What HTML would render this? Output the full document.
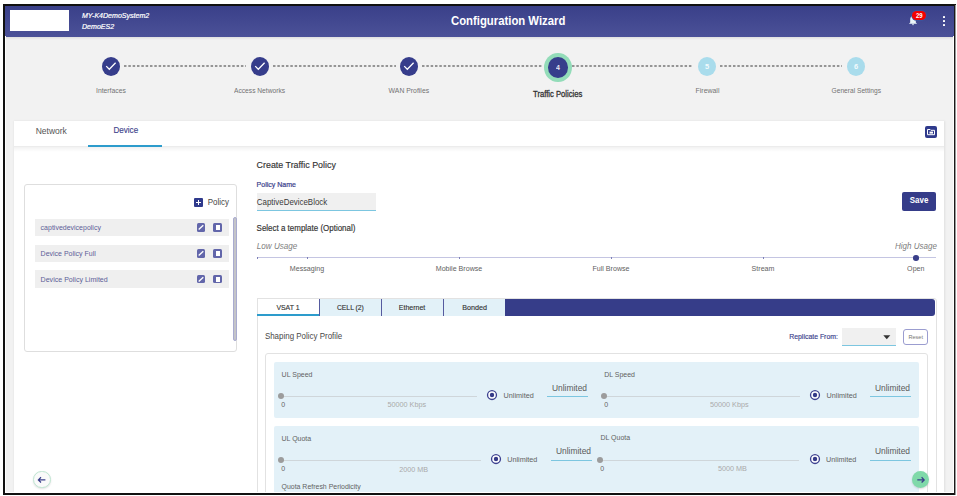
<!DOCTYPE html>
<html><head><meta charset="utf-8">
<style>
*{margin:0;padding:0;box-sizing:border-box}
html,body{width:957px;height:496px;overflow:hidden;background:#fff;font-family:"Liberation Sans",sans-serif}
.a{position:absolute;white-space:nowrap;line-height:1}
.sb{-webkit-text-stroke:0.15px currentColor}
.step{position:absolute;border-radius:50%}
.dash{position:absolute;height:1.8px;top:65.3px;background:repeating-linear-gradient(90deg,#8f8f8f 0 2.6px,transparent 2.6px 4.05px)}
.lbl{font-size:6.8px;color:#737373;margin-top:1.2px}
.row{position:absolute;left:34.5px;width:194.5px;height:17.5px;background:#efefef}
.rowt{font-size:7px;color:#5d5e98}
.ic{position:absolute;width:8.5px;height:8.5px;border-radius:1.5px;background:#6266aa}
.pnl{position:absolute;background:#e3f1f8;border-radius:2px}
.t7{font-size:7px;color:#626262}
.trk{position:absolute;height:1px;background:#cfd6da}
.knob{position:absolute;width:6px;height:6px;border-radius:50%;background:#9c9c9c}
.radio{position:absolute;width:10px;height:10px;border-radius:50%;border:1.5px solid #3a3f8a;background:#fff}
.radio:after{content:"";position:absolute;left:1.1px;top:1.1px;width:4.8px;height:4.8px;border-radius:50%;background:#3a3f8a}
.ul{position:absolute;height:1.3px;background:#7cc6e0}
.tab{position:absolute;top:298.5px;height:17.3px;width:62px;background:#e2f1f8;border-left:1px solid #555a9f}
.tabt{font-size:7px;color:#333;width:62px;height:17.3px;line-height:17.3px;text-align:center;-webkit-text-stroke:0.12px #333}
.lbl,.rowt,.t7{transform:scaleY(1.06);transform-origin:0 50%}
</style></head><body>
<!-- frame -->
<div class="a" style="left:3px;top:4px;width:953px;height:491px;border:2px solid #111;background:#f2f2f2"></div>
<!-- header -->
<div class="a" style="left:5px;top:6px;width:949px;height:30.5px;background:linear-gradient(#3a4089,#4b5198)"></div>
<div class="a" style="left:5px;top:36.5px;width:949px;height:3px;background:linear-gradient(rgba(0,0,0,0.08),rgba(0,0,0,0))"></div>
<div class="a" style="left:10px;top:10px;width:59px;height:21px;background:#fff"></div>
<div class="a" style="left:82px;top:12.1px;font-size:7.05px;font-style:italic;color:#fff;-webkit-text-stroke:0.2px #fff;transform:scaleY(1.06);transform-origin:0 50%">MY-K4DemoSystem2</div>
<div class="a" style="left:82px;top:23.1px;font-size:7.05px;font-style:italic;color:#fff;-webkit-text-stroke:0.2px #fff;transform:scaleY(1.06);transform-origin:0 50%">DemoES2</div>
<div class="a" style="left:450.9px;top:14.8px;font-size:12.4px;font-weight:bold;color:#fff;transform:scaleX(0.914);transform-origin:0 0">Configuration Wizard</div>
<!-- bell -->
<svg class="a" style="left:908.3px;top:13px" width="10" height="14" viewBox="0 0 10 14"><path d="M5 3C3.2 3 2.2 4.6 2.2 6.6v2.8L0.9 10.8h8.2L7.8 9.4V6.6C7.8 4.6 6.8 3 5 3z" fill="#eaf5f8"/><path d="M3.9 10.8h2.2L5 12.6z" fill="#eaf5f8"/></svg>
<div class="a" style="left:912.4px;top:11px;width:13.7px;height:9.4px;border-radius:4.7px;background:#f40000;box-shadow:0 0 0 0.7px #3a56a0"></div>
<div class="a" style="left:912.4px;top:12.7px;width:13.7px;text-align:center;font-size:6px;font-weight:bold;color:#fff;transform:scaleY(1.06);transform-origin:0 50%">29</div>
<div class="a" style="left:943px;top:15.5px;width:2.3px;height:2.1px;background:#fff;border-radius:0.6px"></div>
<div class="a" style="left:943px;top:19.7px;width:2.3px;height:2.1px;background:#fff;border-radius:0.6px"></div>
<div class="a" style="left:943px;top:23.8px;width:2.3px;height:2.1px;background:#fff;border-radius:0.6px"></div>

<!-- stepper -->
<svg class="a" style="left:124px;top:64.1px" width="122" height="4"><line x1="0" y1="2" x2="122" y2="2" stroke="#959595" stroke-width="1.8" stroke-dasharray="2.5 1.83"/></svg>
<svg class="a" style="left:273px;top:64.1px" width="123" height="4"><line x1="0" y1="2" x2="123" y2="2" stroke="#959595" stroke-width="1.8" stroke-dasharray="2.5 1.83"/></svg>
<svg class="a" style="left:422px;top:64.1px" width="120" height="4"><line x1="0" y1="2" x2="120" y2="2" stroke="#959595" stroke-width="1.8" stroke-dasharray="2.5 1.83"/></svg>
<svg class="a" style="left:572px;top:64.1px" width="121" height="4"><line x1="0" y1="2" x2="121" y2="2" stroke="#959595" stroke-width="1.8" stroke-dasharray="2.5 1.83"/></svg>
<svg class="a" style="left:720px;top:64.1px" width="122" height="4"><line x1="0" y1="2" x2="122" y2="2" stroke="#959595" stroke-width="1.8" stroke-dasharray="2.5 1.83"/></svg>

<div class="step" style="left:101.5px;top:57px;width:18.2px;height:19px;background:#363d8b"></div>
<div class="step" style="left:250.7px;top:57px;width:18.2px;height:19px;background:#363d8b"></div>
<div class="step" style="left:399.6px;top:57px;width:18.2px;height:19px;background:#363d8b"></div>
<svg class="a" style="left:101.5px;top:57.3px" width="18" height="18" viewBox="0 0 18 18"><path d="M4.2 9.1l3.1 3.2 6.3-6.6" stroke="#fff" stroke-width="1.25" fill="none"/></svg>
<svg class="a" style="left:250.8px;top:57.3px" width="18" height="18" viewBox="0 0 18 18"><path d="M4.2 9.1l3.1 3.2 6.3-6.6" stroke="#fff" stroke-width="1.25" fill="none"/></svg>
<svg class="a" style="left:399.7px;top:57.3px" width="18" height="18" viewBox="0 0 18 18"><path d="M4.2 9.1l3.1 3.2 6.3-6.6" stroke="#fff" stroke-width="1.25" fill="none"/></svg>
<div class="step" style="left:544.2px;top:52.6px;width:27.6px;height:29px;background:#93dcb9"></div>
<div class="step" style="left:548px;top:57px;width:19.8px;height:20.7px;background:#363d8b"></div>
<div class="a" style="left:548px;top:63.5px;width:20px;text-align:center;font-size:7px;font-weight:bold;color:#e8e8f4;transform:scaleY(1.06);transform-origin:0 50%">4</div>
<div class="step" style="left:698px;top:57px;width:18px;height:19px;background:#a9dcec"></div>
<div class="a" style="left:698px;top:62.6px;width:18px;text-align:center;font-size:7.5px;font-weight:bold;color:#f2fafd;transform:scaleY(1.06);transform-origin:0 50%">5</div>
<div class="step" style="left:847px;top:57px;width:18.2px;height:19px;background:#a9dcec"></div>
<div class="a" style="left:847px;top:62.6px;width:18px;text-align:center;font-size:7.5px;font-weight:bold;color:#f2fafd;transform:scaleY(1.06);transform-origin:0 50%">6</div>

<div class="a lbl" style="left:96px;top:86.6px">Interfaces</div>
<div class="a lbl" style="left:234px;top:86.6px;font-size:6.66px;transform:scaleY(1.06);transform-origin:0 50%">Access Networks</div>
<div class="a lbl" style="left:388.6px;top:86.6px;font-size:6.87px;transform:scaleY(1.06);transform-origin:0 50%">WAN Profiles</div>
<div class="a" style="left:533.3px;top:90.2px;font-size:8.3px;color:#333;-webkit-text-stroke:0.3px #333;transform:scaleX(0.923);transform-origin:0 0">Traffic Policies</div>
<div class="a lbl" style="left:695.6px;top:86.6px;font-size:6.93px;transform:scaleY(1.06);transform-origin:0 50%">Firewall</div>
<div class="a lbl" style="left:831.6px;top:86.6px;font-size:6.64px;transform:scaleY(1.06);transform-origin:0 50%">General Settings</div>

<!-- card -->
<div class="a" style="left:14px;top:121px;width:930px;height:372px;background:#fff;box-shadow:0 0 2px 0.5px rgba(0,0,0,0.08)"></div>
<div class="a" style="left:14px;top:146px;width:930px;height:1px;background:#ececec"></div>
<div class="a" style="left:14px;top:147px;width:930px;height:5px;background:linear-gradient(rgba(0,0,0,0.05),rgba(0,0,0,0))"></div>
<div class="a" style="left:35.7px;top:127.4px;font-size:8.5px;color:#555;transform:scaleY(1.06);transform-origin:0 50%">Network</div>
<div class="a" style="left:113.4px;top:127.1px;font-size:8.1px;color:#3d3f8a;-webkit-text-stroke:0.12px #3d3f8a;transform:scaleY(1.06);transform-origin:0 50%">Device</div>
<div class="a" style="left:88px;top:145.3px;width:74px;height:2px;background:#2d9ccc"></div>
<div class="a" style="left:925.3px;top:126.2px;width:11.5px;height:11.7px;border-radius:2px;background:#2f3a8c"></div>
<svg class="a" style="left:925.3px;top:126.2px" width="12" height="12" viewBox="0 0 12 12"><path d="M2.5 3.5h2.6l0.8 0.8h3.6v4.4h-7z" fill="none" stroke="#fff" stroke-width="1"/><rect x="4.5" y="5.6" width="3.5" height="2" fill="#fff"/></svg>

<!-- left panel -->
<div class="a" style="left:24.2px;top:184.4px;width:213.2px;height:167.3px;border:1px solid #dedede;border-radius:3px;background:#fff"></div>
<div class="a" style="left:194.3px;top:197.9px;width:9px;height:8.8px;border-radius:1px;background:#2f3a8c"></div>
<div class="a" style="left:198.2px;top:199.6px;width:1.3px;height:5.4px;background:#fff"></div>
<div class="a" style="left:196.2px;top:201.6px;width:5.3px;height:1.3px;background:#fff"></div>
<div class="a" style="left:207.7px;top:198.7px;font-size:7.96px;color:#444;transform:scaleY(1.06);transform-origin:0 50%">Policy</div>

<div class="row" style="top:218.7px"></div>
<div class="row" style="top:244.5px"></div>
<div class="row" style="top:270.3px"></div>
<div class="a rowt" style="left:40.6px;top:224.2px">captivedevicepolicy</div>
<div class="a rowt" style="left:40.6px;top:250px">Device Policy Full</div>
<div class="a rowt" style="left:40.6px;top:275.8px;font-size:7.07px;transform:scaleY(1.06);transform-origin:0 50%">Device Policy Limited</div>

<div class="ic" style="left:196.8px;top:223.3px"></div>
<div class="ic" style="left:213.4px;top:223.3px"></div>
<div class="ic" style="left:196.8px;top:249.1px"></div>
<div class="ic" style="left:213.4px;top:249.1px"></div>
<div class="ic" style="left:196.8px;top:274.9px"></div>
<div class="ic" style="left:213.4px;top:274.9px"></div>
<svg class="a" style="left:196.8px;top:223.3px" width="9" height="9"><path d="M1.7 6.4L6.3 2.2" stroke="#fff" stroke-width="1.35"/></svg>
<svg class="a" style="left:196.8px;top:249.1px" width="9" height="9"><path d="M1.7 6.4L6.3 2.2" stroke="#fff" stroke-width="1.35"/></svg>
<svg class="a" style="left:196.8px;top:274.9px" width="9" height="9"><path d="M1.7 6.4L6.3 2.2" stroke="#fff" stroke-width="1.35"/></svg>
<div class="a" style="left:216px;top:225.3px;width:3.6px;height:4.8px;background:#fff"></div>
<div class="a" style="left:216px;top:251.1px;width:3.6px;height:4.8px;background:#fff"></div>
<div class="a" style="left:216px;top:276.9px;width:3.6px;height:4.8px;background:#fff"></div>
<div class="a" style="left:232.6px;top:217.2px;width:4px;height:124px;border-radius:2px;background:#c4c4c8;border:0.6px solid #a9abd0"></div>

<!-- form -->
<div class="a sb" style="left:256.6px;top:161.4px;font-size:8.88px;color:#333;transform:scaleY(1.06);transform-origin:0 50%">Create Traffic Policy</div>
<div class="a" style="left:256.6px;top:181px;font-size:6.55px;font-weight:bold;color:#3b3f8c;font-weight:normal;-webkit-text-stroke:0.2px #3b3f8c;font-size:7px;transform:scaleY(1.06);transform-origin:0 50%">Policy Name</div>
<div class="a" style="left:256.6px;top:193.3px;width:119.2px;height:17px;background:#f0f0f0"></div>
<div class="a ul" style="left:256.6px;top:209.5px;width:119.2px"></div>
<div class="a" style="left:256.8px;top:198.5px;font-size:7.93px;color:#3a3a3a;transform:scaleY(1.06);transform-origin:0 50%">CaptiveDeviceBlock</div>
<div class="a" style="left:902.2px;top:191.7px;width:33.8px;height:18.9px;border-radius:2px;background:#353c89"></div>
<div class="a" style="left:902.2px;top:197px;width:33.8px;text-align:center;font-size:7.95px;font-weight:bold;color:#fff;transform:scaleY(1.06);transform-origin:0 50%">Save</div>

<div class="a sb" style="left:256.6px;top:224.9px;font-size:7.97px;color:#333;transform:scaleY(1.06);transform-origin:0 50%">Select a template (Optional)</div>
<div class="a" style="left:256.8px;top:243px;font-size:8.1px;font-style:italic;color:#808080;transform:scaleY(1.06);transform-origin:0 50%">Low Usage</div>
<div class="a" style="left:895px;top:242.5px;font-size:8.04px;font-style:italic;color:#808080;transform:scaleY(1.06);transform-origin:0 50%">High Usage</div>
<div class="a" style="left:256.5px;top:257.2px;width:679px;height:1.3px;background:#c4c5e2"></div>
<div class="a" style="left:256.8px;top:257px;width:1px;height:1.6px;background:#7e81b8"></div>
<div class="a" style="left:307px;top:257px;width:1px;height:1.6px;background:#7e81b8"></div>
<div class="a" style="left:459px;top:257px;width:1px;height:1.6px;background:#7e81b8"></div>
<div class="a" style="left:611px;top:257px;width:1px;height:1.6px;background:#7e81b8"></div>
<div class="a" style="left:763px;top:257px;width:1px;height:1.6px;background:#7e81b8"></div>
<div class="a" style="left:913.1px;top:255px;width:5.6px;height:5.6px;border-radius:50%;background:#3a3f8a"></div>
<div class="a t7" style="left:257px;top:265.7px;width:100px;text-align:center;font-size:7.1px;transform:scaleY(1.06);transform-origin:0 50%">Messaging</div>
<div class="a t7" style="left:409px;top:265.7px;width:100px;text-align:center;font-size:7.1px;transform:scaleY(1.06);transform-origin:0 50%">Mobile Browse</div>
<div class="a t7" style="left:561px;top:265.7px;width:100px;text-align:center;font-size:7.1px;transform:scaleY(1.06);transform-origin:0 50%">Full Browse</div>
<div class="a t7" style="left:713px;top:265.7px;width:100px;text-align:center;font-size:7.1px;transform:scaleY(1.06);transform-origin:0 50%">Stream</div>
<div class="a t7" style="left:865.8px;top:265.7px;width:100px;text-align:center;font-size:7.1px;transform:scaleY(1.06);transform-origin:0 50%">Open</div>

<!-- tabs -->
<div class="a" style="left:257px;top:298.2px;width:679.6px;height:200px;border:1px solid #e2e2e2;border-radius:3px"></div>
<div class="a" style="left:257px;top:298.2px;width:62.4px;height:17.6px;background:#fff;border-top:1px solid #e2e2e2;border-left:1px solid #e2e2e2"></div>
<div class="a" style="left:257px;top:314px;width:62.4px;height:2px;background:#2d9ccc"></div>
<div class="tab" style="left:319px"></div>
<div class="tab" style="left:381px"></div>
<div class="tab" style="left:443px"></div>
<div class="a" style="left:505px;top:298.5px;width:430px;height:17.2px;background:#363d89;border-radius:0 3px 3px 0"></div>
<div class="a tabt" style="left:257px;top:298.9px;font-size:6.92px;transform:scaleY(1.06);transform-origin:0 50%">VSAT 1</div>
<div class="a tabt" style="left:319.4px;top:298.9px;font-size:6.8px;transform:scaleY(1.06);transform-origin:0 50%">CELL (2)</div>
<div class="a tabt" style="left:381px;top:298.9px;font-size:7px;transform:scaleY(1.06);transform-origin:0 50%">Ethernet</div>
<div class="a tabt" style="left:443.6px;top:298.9px;font-size:7.2px;transform:scaleY(1.06);transform-origin:0 50%">Bonded</div>

<div class="a" style="left:264.9px;top:332.8px;font-size:7.96px;color:#484848;transform:scaleY(1.06);transform-origin:0 50%">Shaping Policy Profile</div>
<div class="a sb" style="left:789.2px;top:333.9px;font-size:6.92px;color:#3b3f8c;transform:scaleY(1.06);transform-origin:0 50%">Replicate From:</div>
<div class="a" style="left:841.5px;top:328px;width:54.4px;height:17.6px;background:#f0f0f0"></div>
<div class="a ul" style="left:841.5px;top:344.6px;width:54.4px"></div>
<svg class="a" style="left:882.5px;top:334.5px" width="8" height="5"><path d="M0.3 0.3h7l-3.5 4z" fill="#333"/></svg>
<div class="a" style="left:903.4px;top:329.2px;width:24.6px;height:15.5px;border:1px solid #9b9dd0;border-radius:3px"></div>
<div class="a" style="left:903.4px;top:334.5px;width:24.6px;text-align:center;font-size:5.6px;color:#777;transform:scaleY(1.06);transform-origin:0 50%">Reset</div>

<div class="a" style="left:264.6px;top:353.4px;width:663px;height:160px;border:1px solid #e2e2e2;border-radius:3px"></div>
<div class="pnl" style="left:273.5px;top:362px;width:645.5px;height:55.8px"></div>
<div class="pnl" style="left:273.8px;top:425.9px;width:645.5px;height:80px"></div>

<!-- panel 1 -->
<div class="a t7" style="left:281.6px;top:371px">UL Speed</div>
<div class="trk" style="left:281px;top:395.5px;width:195.5px"></div>
<div class="knob" style="left:277.8px;top:393.3px"></div>
<div class="a t7" style="left:281.2px;top:401.2px">0</div>
<div class="a t7" style="left:387.5px;top:401.1px;font-size:7.23px;color:#aaa;transform:scaleY(1.06);transform-origin:0 50%">50000 Kbps</div>
<svg class="a" style="left:485.0px;top:388.1px" width="14" height="14" viewBox="0 0 14 14"><circle cx="7" cy="7" r="4.45" fill="#fff" stroke="#3d4290" stroke-width="1.35"/><circle cx="7" cy="7" r="2.2" fill="#343a88"/></svg>
<div class="a t7" style="left:503.6px;top:391.7px;font-size:7.25px;transform:scaleY(1.06);transform-origin:0 50%">Unlimited</div>
<div class="a" style="left:552px;top:383.8px;font-size:8.41px;color:#5a5a5a;transform:scaleY(1.06);transform-origin:0 50%">Unlimited</div>
<div class="ul" style="left:547.2px;top:395.5px;width:40.8px"></div>

<div class="a t7" style="left:604.3px;top:371.6px;font-size:6.96px;transform:scaleY(1.06);transform-origin:0 50%">DL Speed</div>
<div class="trk" style="left:604px;top:395.5px;width:195.8px"></div>
<div class="knob" style="left:601.3px;top:393px"></div>
<div class="a t7" style="left:604.3px;top:401.4px">0</div>
<div class="a t7" style="left:710px;top:401.1px;font-size:7.23px;color:#aaa;transform:scaleY(1.06);transform-origin:0 50%">50000 Kbps</div>
<svg class="a" style="left:807.6px;top:388.1px" width="14" height="14" viewBox="0 0 14 14"><circle cx="7" cy="7" r="4.45" fill="#fff" stroke="#3d4290" stroke-width="1.35"/><circle cx="7" cy="7" r="2.2" fill="#343a88"/></svg>
<div class="a t7" style="left:826.6px;top:391.7px;font-size:7.25px;transform:scaleY(1.06);transform-origin:0 50%">Unlimited</div>
<div class="a" style="left:875px;top:383.8px;font-size:8.41px;color:#5a5a5a;transform:scaleY(1.06);transform-origin:0 50%">Unlimited</div>
<div class="ul" style="left:870px;top:395.5px;width:41px"></div>

<!-- panel 2 -->
<div class="a t7" style="left:281.5px;top:435.1px">UL Quota</div>
<div class="trk" style="left:281px;top:459.6px;width:199.7px"></div>
<div class="knob" style="left:278.1px;top:456.9px"></div>
<div class="a t7" style="left:281.2px;top:465.4px">0</div>
<div class="a t7" style="left:399.2px;top:465.5px;font-size:7.22px;color:#aaa;transform:scaleY(1.06);transform-origin:0 50%">2000 MB</div>
<svg class="a" style="left:488.9px;top:452.2px" width="14" height="14" viewBox="0 0 14 14"><circle cx="7" cy="7" r="4.45" fill="#fff" stroke="#3d4290" stroke-width="1.35"/><circle cx="7" cy="7" r="2.2" fill="#343a88"/></svg>
<div class="a t7" style="left:507.2px;top:455.8px;font-size:7.25px;transform:scaleY(1.06);transform-origin:0 50%">Unlimited</div>
<div class="a" style="left:556px;top:447.1px;font-size:8.41px;color:#5a5a5a;transform:scaleY(1.06);transform-origin:0 50%">Unlimited</div>
<div class="ul" style="left:550.8px;top:459.7px;width:41.4px"></div>

<div class="a t7" style="left:600.5px;top:435.3px;font-size:6.97px;transform:scaleY(1.06);transform-origin:0 50%">DL Quota</div>
<div class="trk" style="left:600px;top:459.8px;width:199.3px"></div>
<div class="knob" style="left:597px;top:457px"></div>
<div class="a t7" style="left:600.2px;top:465.4px">0</div>
<div class="a t7" style="left:717.9px;top:465.3px;font-size:7.25px;color:#aaa;transform:scaleY(1.06);transform-origin:0 50%">5000 MB</div>
<svg class="a" style="left:807.7px;top:452.4px" width="14" height="14" viewBox="0 0 14 14"><circle cx="7" cy="7" r="4.45" fill="#fff" stroke="#3d4290" stroke-width="1.35"/><circle cx="7" cy="7" r="2.2" fill="#343a88"/></svg>
<div class="a t7" style="left:826.1px;top:455.8px;font-size:7.25px;transform:scaleY(1.06);transform-origin:0 50%">Unlimited</div>
<div class="a" style="left:875px;top:447.3px;font-size:8.41px;color:#5a5a5a;transform:scaleY(1.06);transform-origin:0 50%">Unlimited</div>
<div class="ul" style="left:870px;top:459.8px;width:41.2px"></div>
<div class="a t7" style="left:281.5px;top:484.2px;font-size:6.96px;transform:scaleY(1.06);transform-origin:0 50%">Quota Refresh Periodicity</div>

<!-- floating buttons -->
<div class="a" style="left:33px;top:470.5px;width:17.5px;height:17.5px;border-radius:50%;background:#fafafa;border:1px solid #bfe7d2;box-shadow:0 1px 2px rgba(0,0,0,0.12)"></div>
<svg class="a" style="left:33px;top:470.5px" width="18" height="18" viewBox="0 0 18 18"><path d="M12.4 8.9H5.4M8 6.3L5.4 8.9l2.6 2.6" stroke="#3a3f8a" stroke-width="1.25" fill="none"/></svg>
<div class="a" style="left:911.7px;top:470.7px;width:17.4px;height:17.4px;border-radius:50%;background:#7fd9a9;box-shadow:0 1px 2px rgba(0,0,0,0.15)"></div>
<svg class="a" style="left:911.7px;top:470.7px" width="18" height="18" viewBox="0 0 18 18"><path d="M5.3 8.9H12.2M9.6 6.3L12.2 8.9l-2.6 2.6" stroke="#3a3f8a" stroke-width="1.25" fill="none"/></svg>

<!-- frame border on top -->
<div class="a" style="left:5px;top:36px;width:1px;height:457px;background:#fff"></div>
<div class="a" style="left:5px;top:492px;width:949px;height:1px;background:#fff"></div>
<div class="a" style="left:953px;top:36px;width:1px;height:457px;background:#fff"></div>
<div class="a" style="left:0;top:493px;width:957px;height:3px;background:#fff"></div>
<div class="a" style="left:3px;top:4px;width:951px;height:491px;border:2px solid #111;border-right:0"></div>
<div class="a" style="left:954px;top:4px;width:1px;height:491px;background:#1a1a1a"></div>
<div class="a" style="left:955px;top:5px;width:1px;height:490px;background:#9a9a9a"></div>
</body></html>
